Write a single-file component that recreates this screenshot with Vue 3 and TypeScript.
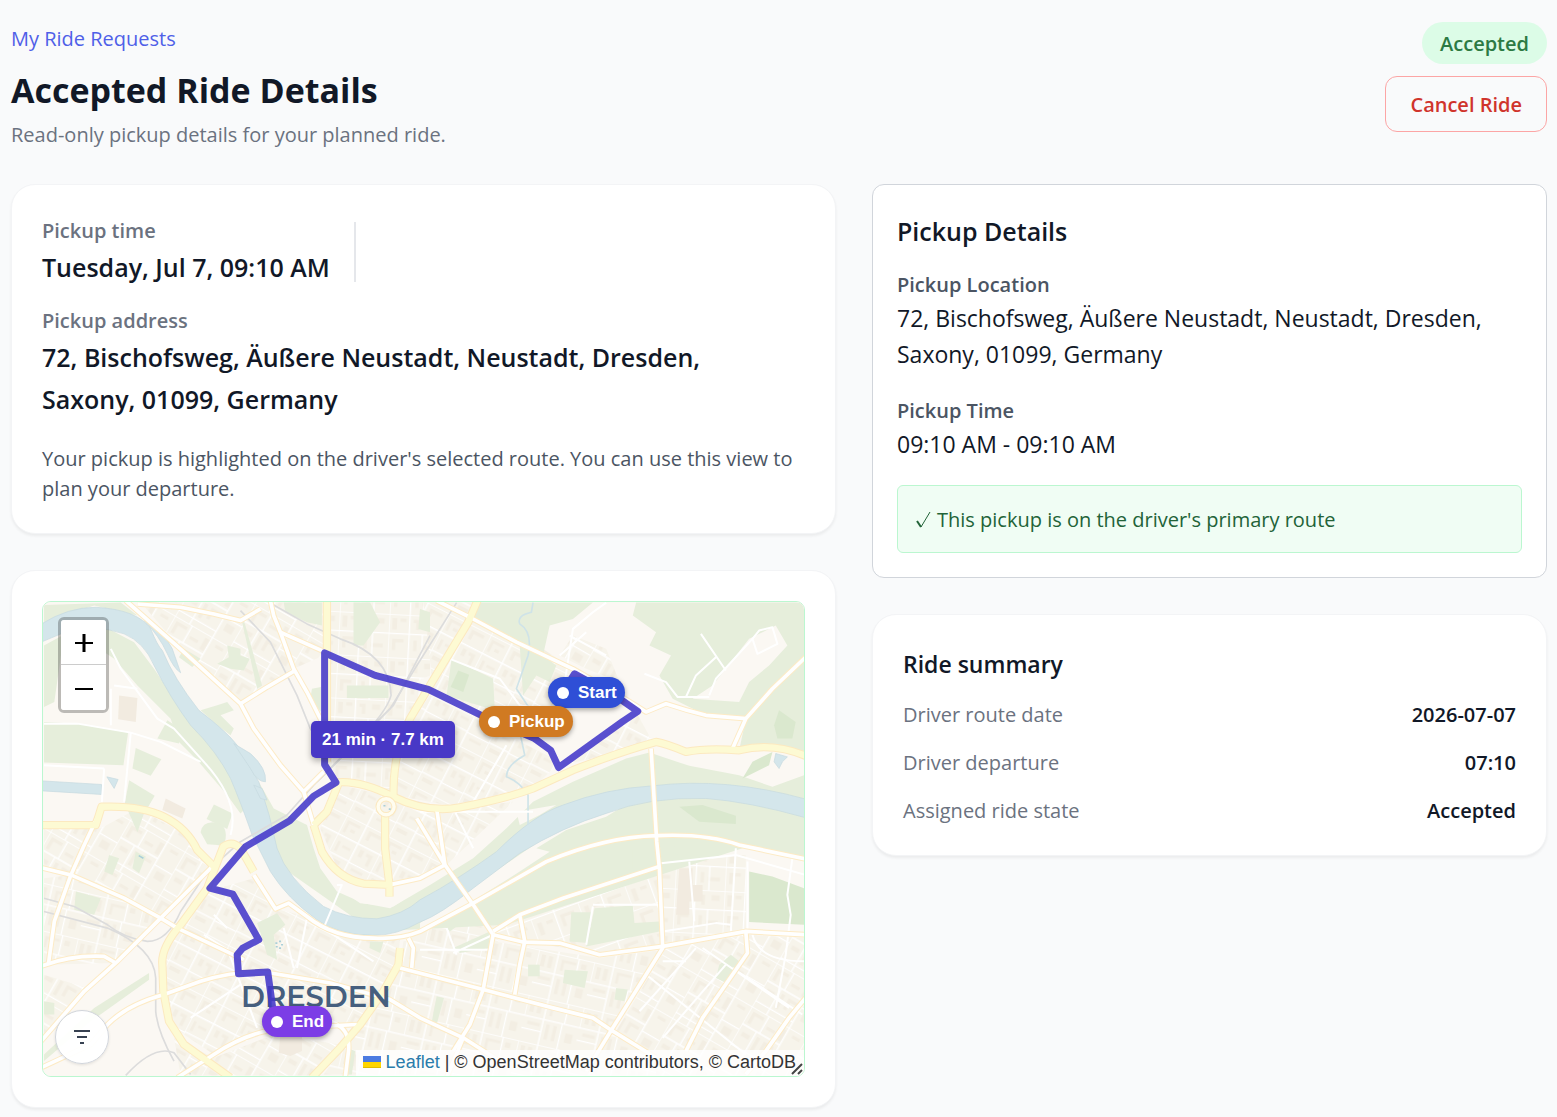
<script setup lang="ts">
interface Area {
  kind: string
  d: string
}

const summary = [
  { label: 'Driver route date', value: '2026-07-07' },
  { label: 'Driver departure', value: '07:10' },
  { label: 'Assigned ride state', value: 'Accepted' },
]

const districts: Area[] = [
  { kind: 'grid-a', d: 'M300 21L860 21L850 180L760 220L600 325L430 170Z' },
  { kind: 'grid-b', d: 'M870 21H1170V240L1060 290L870 170Z' },
  { kind: 'grid-c', d: 'M1170 300L1560 500L1480 580L1260 637L1060 600L1070 440Z' },
  { kind: 'grid-c', d: 'M1150 21L1300 21L1600 220L1480 430L1180 280Z' },
  { kind: 'grid-b', d: 'M870 190L1170 290L1060 480V600L900 560L860 500Z' },
  { kind: 'grid-c', d: 'M840 700L900 570L1060 605L1250 640L1420 620L1215 815L1048 870L900 840Z' },
  { kind: 'grid-a', d: 'M9 700H180L290 640L440 720L520 815L360 970L90 840L9 820Z' },
  { kind: 'grid-d', d: 'M9 850L90 840L360 970L225 1105L9 1110Z' },
  { kind: 'grid-c', d: 'M500 890L640 850L705 942L800 965L980 1030L1080 1035L1070 1110L960 1290L690 1310L520 1380L385 1290L365 1090Z' },
  { kind: 'grid-d', d: 'M1090 1040L1300 930L1380 1020L1330 1185L1220 1440H850L960 1290L1080 1110Z' },
  { kind: 'grid-e', d: 'M1300 930L1520 800L1700 742H1852L1870 1055L1680 1080L1360 1020Z' },
  { kind: 'grid-d', d: 'M1360 1040L1680 1090L1870 1065L1720 1300L1330 1180Z' },
  { kind: 'grid-b', d: 'M1860 810L2120 780V1010L1870 1050Z' },
  { kind: 'grid-a', d: 'M1880 1060L2120 1020L2295 1030V1443H1650Z' },
  { kind: 'grid-d', d: 'M1330 1190L1660 1280L1850 1400V1443H1220Z' },
  { kind: 'grid-a', d: 'M400 1330L520 1390L700 1320L900 1350L820 1443H420Z' },
  { kind: 'grid-a', d: 'M9 1140L140 1180L9 1330Z' },
  { kind: 'grid-c', d: 'M1570 510L1790 350L1840 440L1740 470Z' },
  { kind: 'grid-a', d: 'M1600 120L1700 160L1740 260L1640 220L1560 180Z' },
]

const areas: Area[] = [
  { kind: 'park', d: 'M9 28L240 21L290 60L160 30L9 80Z' },
  { kind: 'park', d: 'M9 150L100 100L200 98L280 140L340 220L440 370L530 460L580 550L615 640L600 655L560 600L470 495L415 440L390 370L290 270L220 190L130 130L60 180L40 320L9 335Z' },
  { kind: 'park', d: 'M9 380L110 385L262 412L248 510L9 502Z' },
  { kind: 'park', d: 'M285 458L362 492L330 542L275 520Z' },
  { kind: 'park', d: 'M265 555L342 602L308 660L290 712L252 625Z' },
  { kind: 'park', d: 'M520 628L576 655L560 702L498 672Z' },
  { kind: 'park', d: 'M480 712Q485 680 520 682T556 720T530 750L500 748Z' },
  { kind: 'park', d: 'M380 375L418 400L415 445L350 430Z' },
  { kind: 'park', d: 'M430 160L480 190L455 215L415 185Z' },
  { kind: 'park', d: 'M560 150L600 160L600 180L628 190L610 225L570 220L530 205L565 185Z' },
  { kind: 'park', d: 'M605 80L612 80L665 270L650 280Z' },
  { kind: 'park', d: 'M480 345L530 330L560 320L580 345L540 360L580 400L570 420L530 390Z' },
  { kind: 'park', d: 'M730 21H845V90L800 80L735 50Z' },
  { kind: 'park', d: 'M940 21H990L1020 80L970 150H940Z' },
  { kind: 'park', d: 'M1140 40L1170 50V110L1135 100Z' },
  { kind: 'park', d: 'M920 270H1045V308H920Z' },
  { kind: 'park', d: 'M815 280L842 275V350L810 310Z' },
  { kind: 'park', d: 'M1235 190L1360 250L1365 345L1220 300Z' },
  { kind: 'wood', d: 'M1255 225L1288 238L1270 290L1232 275Z' },
  { kind: 'park', d: 'M1320 21H1660L1600 70L1530 90L1510 180L1550 210L1530 260L1490 240L1450 300L1440 150L1290 65Z' },
  { kind: 'park', d: 'M1790 21H2295V480L2190 450L2100 465L2120 370L1980 350L1900 310L1860 240L1895 180L1830 150L1850 110L1780 60Z' },
  { kind: 'land', d: 'M1960 310L2020 270L2130 130L2210 90L2245 150L2190 210L2130 260L2100 320Z' },
  { kind: 'wood', d: 'M2220 345L2270 380L2260 430L2215 430L2205 390Z' },
  { kind: 'park', d: 'M655 560L700 640L800 690L820 760L840 820L890 890L970 925L1050 940L1170 870L1300 790L1400 700L1480 620L1600 560L1760 490L1830 472L1950 512L2100 540L2200 575L2295 540V700L1400 990L1000 1010L700 800Z' },
  { kind: 'park', d: 'M1460 790L1540 735L1700 650L1860 612L2295 660V790L2100 745L2000 722L1840 715L1660 742Z' },
  { kind: 'land', d: 'M1570 690L1740 640L1700 665L1580 705L1490 760L1530 770L1440 830L1200 980L1140 1010V985Z' },
  { kind: 'land', d: 'M845 770L900 850L980 890L1060 905L1170 850L1215 815L1190 850L1060 935L960 925L880 870Z' },
  { kind: 'land', d: 'M1430 650L1550 630L1500 660L1440 690Z' },
  { kind: 'wood', d: 'M1920 635L1990 630L2090 662V687L1980 680Z' },
  { kind: 'wood', d: 'M2140 500L2200 470L2190 510L2110 550Z' },
  { kind: 'park', d: 'M1915 730L2030 735V755L1950 795L1900 770Z' },
  { kind: 'wood', d: 'M2130 830L2200 845L2295 880V990L2130 982Z' },
  { kind: 'park', d: 'M1665 940L1780 932L1785 985L1860 980V1010L1640 1055Z' },
  { kind: 'park', d: 'M1595 952H1655L1645 1045L1590 1040Z' },
  { kind: 'park', d: 'M1575 1125L1645 1130L1635 1180L1570 1165Z' },
  { kind: 'park', d: 'M1780 765H1818V820H1780Z' },
  { kind: 'park', d: 'M1360 950L1400 925L1420 945L1370 975Z' },
  { kind: 'park', d: 'M1210 990L1280 950L1290 965L1230 1010Z' },
  { kind: 'park', d: 'M1240 1060L1350 1010V1060L1260 1075Z' },
  { kind: 'park', d: 'M1465 1110H1500V1145H1465Z' },
  { kind: 'park', d: 'M2040 1110L2075 1080L2100 1100L2060 1165L2030 1150Z' },
  { kind: 'park', d: 'M1730 1180L1765 1185L1755 1220L1725 1215Z' },
  { kind: 'park', d: 'M650 985L710 955L735 990L700 1020L710 1095L680 1080L665 1030Z' },
  { kind: 'park', d: 'M105 890L180 910L160 960L100 945Z' },
  { kind: 'park', d: 'M205 780L235 790L215 840L190 830Z' },
  { kind: 'park', d: 'M285 770L315 785L295 835L275 820Z' },
  { kind: 'park', d: 'M160 1240L325 1135V1155L200 1245L150 1280L9 1400V1380Z' },
  { kind: 'park', d: 'M9 1220L40 1225V1260H9Z' },
  { kind: 'park', d: 'M990 1040H1030L1020 1075L988 1060Z' },
  { kind: 'park', d: 'M920 1360L945 1370L935 1440H915Z' },
  { kind: 'park', d: 'M1190 1205L1212 1210L1190 1290L1172 1300Z' },
  { kind: 'building', d: 'M235 300L290 308L285 380L232 372Z' },
  { kind: 'building', d: 'M375 610L435 640L425 670L365 645Z' },
  { kind: 'building', d: 'M720 1320H785V1370L750 1385L715 1375Z' },
  { kind: 'building', d: 'M1920 820H1960V870H1990V920H1950V960H1910Z' },
]

const trunkRoads = [
  'M860 10V500',
  'M0 690H165L182 635Q300 630 370 665T470 765L520 815',
  'M640 830L600 760Q575 735 548 755L500 880L420 990Q360 1060 365 1110L368 1190L385 1280L430 1350L570 1450',
  'M890 562Q960 555 1060 605T1260 637Q1400 610 1480 580L1600 525Q1740 470 1850 440Q1880 445 1940 470Q2000 458 2100 465Q2200 440 2300 482',
  'M1315 10L1285 80L1170 270L1110 370Q1060 460 1060 600',
  'M895 565L860 650L820 690',
  'M820 690L845 770Q890 850 970 866L1048 870V905',
  'M1035 660V760L1048 870',
  'M1080 1060L1075 1110L1030 1190L960 1290L900 1360L815 1450',
]

const mainRoads = [
  'M255 15L340 90L430 170L600 325L640 400L720 510L790 590L820 690',
  'M290 25L420 35L520 55L600 75L660 40',
  'M690 15L700 60L720 110L760 220L800 290L850 390',
  'M600 325L680 275L765 225',
  'M720 110L855 170',
  'M790 590L850 530',
  'M1190 15L1290 65L1430 140L1600 220L1740 300L1820 350L1880 325Q1940 345 2000 360L2120 370',
  'M2300 185L2200 280L2120 370L2080 460',
  'M1835 460L1852 740L1860 820L1870 1060L1720 1300L1640 1430',
  'M640 840L705 942L745 925L800 965Q880 1030 1000 1030Q1080 1035 1140 1010L1300 925L1520 800Q1700 725 1852 722Q2000 715 2100 750L2300 792',
  'M1190 640L1215 810',
  'M1130 670L1215 810L1300 930L1360 1020',
  'M1360 1020L1450 1042L1560 1045L1680 1080L1870 1055L2120 1010L2300 1020',
  'M1360 1020L1330 1185L1290 1290L1240 1370',
  'M1080 1120L1330 1185L1540 1240L1660 1270L1720 1310L1850 1390',
  'M0 1420L150 1350L200 1290Q260 1230 370 1200L480 1160Q590 1125 690 1135L870 1165L1050 1215L1140 1270L1270 1330L1380 1400',
  'M1270 1330L1220 1450',
  'M0 818L90 840L250 910L360 970L410 1000L610 1095',
  'M182 640L130 750L90 840L40 980L22 1110',
  'M0 1340L130 1190L230 1100L360 970L440 890L530 800',
  'M0 1115Q90 1080 190 1085L225 1105',
  'M410 1450L520 1380Q640 1300 760 1300L950 1290',
  'M2120 1010L2125 1075L1990 1270L1940 1370',
  'M2300 1210L2250 1270L2180 1370L2120 1440',
  'M1425 1200L1440 1110L1455 1040L1440 960',
  'M1360 1010L1440 960L1570 910L1860 815',
  'M1048 870L1140 850L1215 810',
  'M1105 1030L1120 1060L1115 1120',
  'M890 1290Q930 1310 925 1370L915 1450',
]

const minorRoads = [
  'M210 160L240 220L350 370L400 400L490 500Q600 620 570 720',
  'M9 385L110 385L270 412L360 440L480 500',
  'M270 412L250 620M190 520L182 635M9 510L190 520',
  'M210 280V390M220 270L290 280',
  'M1560 360L1600 100L1660 50L1700 21M1230 190L1380 250L1440 330L1560 350',
  'M1640 110L1560 180M1590 120L1700 180',
  'M1815 235L1880 260L1915 305H2010M1985 115L2060 225M1940 305L1970 240L2030 185',
  'M2010 300L2030 250L2140 130',
  'M2140 130L2160 105L2200 95L2215 145L2155 175Z',
  'M1240 640L1300 760M1140 650H1480M1400 450L1300 620',
  'M1865 805L2090 780L2300 840M1950 800L1965 980M2090 760L2075 1010M2125 800V1010',
  'M2260 790L2245 900L2255 960L2240 1080L2210 1240',
  'M1660 930H1860M1660 935L1640 1050M1870 1010L2030 985L2075 990',
  'M1360 1020L1240 1075M1140 1065H1350M1220 1000L1250 1080',
  'M2140 1020Q2160 1100 2295 1100M2080 1120L2290 1260M1990 1060L2250 1240',
  'M1870 1100H1940M1820 1140L2120 1380M1800 1250L1970 1060M1870 1330L2060 1110',
  'M890 870L905 870L850 1000',
  'M490 1020L600 1090M520 960L560 1000M560 1060L650 1300M450 1270L600 1170',
  'M730 1000L760 1120M800 970L770 1120M850 1000L1000 1100',
]

const rails = [
  'M600 45L690 140L770 300L810 400L860 480',
  'M700 28L800 85L900 130Q1050 180 1053 300Q1040 350 950 440L820 570L740 660L600 740L500 830L420 950Q380 1040 320 1040Q250 1030 200 990L100 935L9 910',
  'M9 950L200 1000Q340 1060 345 1150V1250Q350 1310 400 1400',
  'M1170 120L1060 330L830 560',
  'M1250 21L1140 195L1050 340L840 550',
  'M255 1443Q340 1350 400 1375L450 1440',
]

const routePath =
  'M1590 258L1605 235L1740 310L1795 348L1750 378L1557 517L1533 465L1485 430L1320 358L1165 282L1005 240L853 172L853 508L887 562L820 603L748 677L615 755L508 880L577 898L655 1035L607 1060L590 1080L594 1137L682 1132L697 1240L720 1270'
</script>

<template>
  <main class="page">
    <header class="header">
      <div class="heading">
        <a class="back" href="#">My Ride Requests</a>
        <h1>Accepted Ride Details</h1>
        <p class="subtitle">Read-only pickup details for your planned ride.</p>
      </div>
      <div class="actions">
        <span class="badge">Accepted</span>
        <button type="button" class="cancel">Cancel Ride</button>
      </div>
    </header>

    <div class="columns">
      <div class="column">
        <section class="card">
          <div class="time-row">
            <div>
              <p class="label">Pickup time</p>
              <p class="lead">Tuesday, Jul 7, 09:10 AM</p>
            </div>
            <span class="divider"></span>
          </div>
          <div class="address">
            <p class="label">Pickup address</p>
            <p class="lead">72, Bischofsweg, Äußere Neustadt, Neustadt, Dresden, Saxony, 01099, Germany</p>
          </div>
          <p class="note">Your pickup is highlighted on the driver's selected route. You can use this view to plan your departure.</p>
        </section>

        <section class="card map-card">
          <div class="map">
            <svg class="layer" viewBox="6 18 2289 1428" preserveAspectRatio="xMidYMid slice" aria-hidden="true">
              <defs>
                <pattern id="grid-a" width="190" height="150" patternUnits="userSpaceOnUse" patternTransform="rotate(30)">
                  <rect width="190" height="150" class="urban" />
                  <path class="house" d="M12 12H50V22H22V50H12ZM70 30H98V40H70ZM112 12H126V50H112ZM150 14H176V24H150ZM14 80H40V94H14ZM60 72H70V120H60ZM84 74H118V84H94V110H84ZM146 92H174V116H146Z" />
                  <path class="street" d="M0 0H190M0 60H130M130 80H190M60 0V60M130 0V150M0 0V150M50 60V150M0 130H130" />
                </pattern>
                <pattern id="grid-b" width="150" height="130" patternUnits="userSpaceOnUse" patternTransform="rotate(3)">
                  <rect width="150" height="130" class="urban" />
                  <path class="house" d="M10 12H24V46H10ZM34 12H52V22H34ZM74 14H92V44H82V24H74ZM112 14H136V30H112ZM12 74H46V84H22V108H12ZM76 76H86V108H76ZM98 90H134V102H98Z" />
                  <path class="street" d="M0 0H150M0 58H150M62 0V130M0 0V58M102 58V130M0 58V130" />
                </pattern>
                <pattern id="grid-c" width="140" height="170" patternUnits="userSpaceOnUse" patternTransform="rotate(27)">
                  <rect width="140" height="170" class="urban" />
                  <path class="house" d="M10 12H52V20H18V50H10ZM30 32H44V42H30ZM82 12H124V22H92V42H82ZM12 80H20V112H12ZM30 86H56V94H30ZM84 74H96V96H84ZM106 76H126V112H116V86H106ZM12 134H46V146H12ZM84 136H122V144H84Z" />
                  <path class="street" d="M0 0H140M0 62H140M68 0V170M0 0V170M0 122H68M68 124H140" />
                </pattern>
                <pattern id="grid-d" width="170" height="140" patternUnits="userSpaceOnUse" patternTransform="rotate(13)">
                  <rect width="170" height="140" class="urban" />
                  <path class="house" d="M12 12H24V48H12ZM34 12H46V48H34ZM74 14H118V22H82V48H74ZM134 14H150V30H134ZM14 76H52V86H14ZM72 74H82V120H72ZM94 74H104V120H94ZM134 88H156V116H134Z" />
                  <path class="street" d="M0 0H170M0 62H170M60 0V140M124 0V62M118 62V140M0 0V62M0 100H60" />
                </pattern>
                <pattern id="grid-e" width="150" height="150" patternUnits="userSpaceOnUse" patternTransform="rotate(-20)">
                  <rect width="150" height="150" class="urban" />
                  <path class="house" d="M14 14H56V24H24V50H14ZM90 14H104V48H90ZM116 20H132V30H116ZM14 88H28V126H14ZM42 90H62V100H42ZM88 86H132V96H98V124H88Z" />
                  <path class="street" d="M0 0H150M0 70H150M74 0V150M0 70V150" />
                </pattern>
              </defs>
              <rect class="land" x="0" y="0" width="2310" height="1460" />
              <path v-for="(a, i) in districts" :key="'d' + i" :d="a.d" :class="a.kind" />
              <path v-for="(a, i) in areas" :key="'a' + i" :d="a.d" :class="a.kind" />
              <path
                class="water"
                d="M0 86Q80 35 165 35Q290 42 330 100Q350 150 365 165Q400 250 475 345Q560 410 590 450Q630 520 655 560Q690 660 710 760Q740 850 850 935Q920 972 1010 972Q1090 960 1140 915Q1260 850 1370 770Q1480 660 1570 630Q1700 580 1840 572Q2060 545 2300 612V668Q2130 620 2000 610Q1830 605 1700 655Q1570 695 1440 775L1300 880Q1200 960 1140 982Q1070 1022 1000 1022Q890 1020 830 975Q740 910 690 830Q650 750 635 720Q600 620 570 550Q530 470 450 390Q390 310 340 210Q310 140 250 115Q150 80 60 115L0 140Z"
              />
              <path
                class="water"
                d="M310 75Q370 110 395 160L420 232Q400 220 380 175Q355 120 310 75ZM580 445L630 475Q680 520 675 560Q650 560 630 520ZM640 570L665 580L680 615L660 610ZM0 557L182 568V598L0 587ZM198 545L232 553L220 580ZM2210 475L2245 485L2230 500L2220 520L2205 500Z"
              />
              <path class="stream" d="M1480 21L1475 50Q1430 60 1440 85Q1480 110 1465 180L1430 280L1470 340L1440 410L1455 480Q1400 510 1400 545Q1440 560 1465 600V690" />
              <path v-for="(d, i) in rails" :key="'r' + i" :d="d" class="rail" />
              <path v-for="(d, i) in minorRoads" :key="'m' + i" :d="d" class="minor" />
              <path v-for="(d, i) in mainRoads" :key="'mc' + i" :d="d" class="main-case" />
              <path v-for="(d, i) in trunkRoads" :key="'tc' + i" :d="d" class="trunk-case" />
              <path v-for="(d, i) in mainRoads" :key="'mf' + i" :d="d" class="main-fill" />
              <path v-for="(d, i) in trunkRoads" :key="'tf' + i" :d="d" class="trunk-fill" />
              <circle class="ring-case" cx="1038" cy="635" r="24" />
              <circle class="ring" cx="1038" cy="635" r="24" />
              <path class="fountain" d="M1030 632h6M1046 642h6M705 1045h6M716 1040h6M722 1050h6M706 1056h6M716 1060h6M294 782l14 8" />
            </svg>
            <span class="city">DRESDEN</span>
            <svg class="layer" viewBox="6 18 2289 1428" preserveAspectRatio="xMidYMid slice" aria-hidden="true">
              <path class="route" :d="routePath" />
            </svg>

            <span class="pin start"><i class="dot"></i>Start</span>
            <span class="pin pickup"><i class="dot"></i>Pickup</span>
            <span class="pin end"><i class="dot"></i>End</span>
            <span class="trip">21 min · 7.7 km</span>

            <div class="zoom">
              <button type="button" aria-label="Zoom in">
                <svg width="20" height="20" viewBox="0 0 20 20"><path d="M1 10H19" stroke-width="2" /><path d="M10 1V19" stroke-width="3" /></svg>
              </button>
              <button type="button" aria-label="Zoom out">
                <svg width="20" height="20" viewBox="0 0 20 20"><path d="M1 10H19" stroke-width="2" /></svg>
              </button>
            </div>

            <button type="button" class="filter" aria-label="Filter">
              <svg width="18" height="16" viewBox="0 0 18 16"><path d="M1 2H17M4 8H14M7 14H11" /></svg>
            </button>

            <div class="attribution">
              <svg class="flag" width="18" height="12" viewBox="0 0 18 12"><path fill="#4c7be1" d="M0 0h18v6H0z" /><path fill="#ffd500" d="M0 6h18v5H0z" /><path fill="#e0bc00" d="M0 11h18v1H0z" /></svg>
              <a href="#">Leaflet</a> | © OpenStreetMap contributors, © CartoDB
            </div>
            <svg class="grip" width="14" height="14" viewBox="0 0 14 14"><path d="M2 12L12 2M8 12L12 8" /></svg>
          </div>
        </section>
      </div>

      <div class="column">
        <section class="details">
          <h2 class="lead">Pickup Details</h2>
          <div class="field">
            <p class="label dark">Pickup Location</p>
            <p class="value">72, Bischofsweg, Äußere Neustadt, Neustadt, Dresden, Saxony, 01099, Germany</p>
          </div>
          <div class="field">
            <p class="label dark">Pickup Time</p>
            <p class="value">09:10 AM - 09:10 AM</p>
          </div>
          <p class="notice">
            <svg width="15" height="18" viewBox="0 0 15 18" aria-hidden="true"><path class="tick-short" d="M1 10L5 16" /><path class="tick-long" d="M5 16L14 1" /></svg>
            <span>This pickup is on the driver's primary route</span>
          </p>
        </section>

        <section class="card summary">
          <h2>Ride summary</h2>
          <dl>
            <div v-for="row in summary" :key="row.label">
              <dt>{{ row.label }}</dt>
              <dd>{{ row.value }}</dd>
            </div>
          </dl>
        </section>
      </div>
    </div>
  </main>
</template>

<style>
body {
  margin: 0;
  background: #f9fafb;
}
</style>

<style scoped>
* {
  box-sizing: border-box;
}
h1,
h2,
p,
dl,
dd {
  margin: 0;
}
button {
  font: inherit;
  cursor: pointer;
}
.page {
  padding: 22px 10px 9px 11px;
  font-family: "Segoe UI", "Open Sans", "Noto Sans", sans-serif;
  font-size: 20px;
  line-height: 30px;
  color: #111827;
}
.header {
  display: flex;
  justify-content: space-between;
  align-items: flex-start;
  margin-bottom: 34px;
}
.heading {
  padding-top: 2px;
}
.back {
  display: block;
  color: #4f5fe8;
  text-decoration: none;
}
h1 {
  margin-top: 14px;
  font-size: 34px;
  line-height: 45px;
  font-weight: 700;
}
.subtitle {
  margin-top: 7px;
  color: #6b7280;
}
.actions {
  display: flex;
  flex-direction: column;
  align-items: flex-end;
  gap: 12px;
}
.badge {
  padding: 7px 18px 5px;
  border-radius: 21px;
  background: #dcfce7;
  color: #2c7a43;
  font-weight: 600;
}
.cancel {
  padding: 13px 24px 11px;
  border: 1px solid #fca5a5;
  border-radius: 12px;
  background: transparent;
  color: #d0342c;
  font-weight: 600;
}
.columns {
  display: grid;
  grid-template-columns: minmax(0, 11fr) minmax(0, 9fr);
  gap: 36px;
  align-items: start;
}
.column {
  display: flex;
  flex-direction: column;
  gap: 36px;
}
.card {
  padding: 31px 30px 29px;
  border: 1px solid #f3f4f6;
  border-radius: 24px;
  background: #fff;
  box-shadow: 0 2px 3px rgba(0, 0, 0, 0.06);
}
.map-card {
  padding: 30px;
}
.time-row {
  display: flex;
  align-items: center;
  gap: 24px;
}
.divider {
  width: 2px;
  height: 60px;
  background: #e5e7eb;
}
.label {
  color: #6b7280;
  font-weight: 600;
}
.label.dark {
  color: #4b5563;
}
.lead {
  font-size: 25px;
  line-height: 42px;
  font-weight: 600;
}
.address {
  margin-top: 18px;
  padding-right: 24px;
}
.note {
  margin-top: 24px;
  color: #4b5563;
}
.details {
  display: flex;
  flex-direction: column;
  gap: 24px;
  padding: 25px 24px 24px;
  border: 1px solid #d1d5db;
  border-radius: 12px;
  background: #fff;
}
.details .lead {
  margin-bottom: -6px;
}
.value {
  font-size: 23px;
  line-height: 36px;
}
.notice {
  display: flex;
  align-items: center;
  gap: 6px;
  margin-top: -1px;
  padding: 19px 18px 17px;
  border: 1px solid #bbf7d0;
  border-radius: 6px;
  background: #f0fdf4;
  color: #226338;
}
.notice svg {
  fill: none;
  stroke: #226338;
}
.tick-short {
  stroke-width: 2;
}
.tick-long {
  stroke-width: 1;
}
.summary h2 {
  font-size: 23px;
  line-height: 36px;
  font-weight: 600;
}
.summary dl {
  display: grid;
  gap: 18px;
  margin-top: 18px;
}
.summary dl div {
  display: flex;
  justify-content: space-between;
}
.summary dt {
  color: #6b7280;
}
.summary dd {
  font-weight: 600;
}

.map {
  position: relative;
  height: 476px;
  overflow: hidden;
  border: 1px solid #bbf7d0;
  border-radius: 9px;
  background: #fbf8f3;
  font-family: "Liberation Sans", Arial, sans-serif;
}
.layer {
  position: absolute;
  inset: 0;
  width: 100%;
  height: 100%;
}
.land {
  fill: #fbf8f3;
}
.urban {
  fill: #f7f4eb;
}
.house {
  fill: #f3eee3;
}
.building {
  fill: #f2ebe0;
}
.grid-a {
  fill: url(#grid-a);
}
.grid-b {
  fill: url(#grid-b);
}
.grid-c {
  fill: url(#grid-c);
}
.grid-d {
  fill: url(#grid-d);
}
.grid-e {
  fill: url(#grid-e);
}
.park {
  fill: #e6eedb;
}
.wood {
  fill: #dae8ce;
}
.water {
  fill: #d4e6eb;
  stroke: #c5dae0;
  stroke-width: 2;
}
.stream,
.rail,
.street,
.minor,
.main-case,
.main-fill,
.trunk-case,
.trunk-fill,
.ring-case,
.ring,
.fountain {
  fill: none;
  stroke-linejoin: round;
}
.stream {
  stroke: #cfe3e8;
  stroke-width: 5;
}
.rail {
  stroke: #dcdcdc;
  stroke-width: 5;
}
.street {
  stroke: #fff;
  stroke-width: 4;
}
.minor {
  stroke: #fff;
  stroke-width: 6;
}
.main-case {
  stroke: #fdebc6;
  stroke-width: 17;
}
.main-fill {
  stroke: #fff;
  stroke-width: 11;
}
.trunk-case {
  stroke: #fce9c0;
  stroke-width: 25;
}
.trunk-fill {
  stroke: #fdfad3;
  stroke-width: 19;
}
.ring-case {
  stroke: #fce9c0;
  stroke-width: 16;
}
.ring {
  stroke: #fffdf0;
  stroke-width: 10;
}
.fountain {
  stroke: #a9cfd8;
  stroke-width: 5;
}
.route {
  fill: none;
  stroke: #4338ca;
  stroke-opacity: 0.88;
  stroke-width: 21;
  stroke-linecap: round;
  stroke-linejoin: round;
}
.city {
  position: absolute;
  left: 198px;
  top: 376px;
  font-family: Montserrat, Inter, sans-serif;
  font-size: 29px;
  line-height: 38px;
  font-weight: 600;
  color: #465f7e;
}
.pin {
  position: absolute;
  display: flex;
  align-items: center;
  gap: 9px;
  height: 31px;
  padding: 0 8px 0 9px;
  border-radius: 16px;
  color: #fff;
  font-size: 17px;
  font-weight: 700;
  white-space: nowrap;
  box-shadow: 0 2px 5px rgba(0, 0, 0, 0.35);
}
.dot {
  width: 12px;
  height: 12px;
  border-radius: 50%;
  background: #fff;
}
.start {
  left: 505px;
  top: 75px;
  background: #2f4fd6;
}
.pickup {
  left: 436px;
  top: 104px;
  background: #d07a22;
}
.end {
  left: 219px;
  top: 404px;
  background: #7c3de6;
}
.trip {
  position: absolute;
  left: 268px;
  top: 119px;
  padding: 0 11px;
  border-radius: 5px;
  background: #4838c6;
  color: #fff;
  font-size: 17px;
  line-height: 37px;
  font-weight: 700;
  white-space: nowrap;
  box-shadow: 0 3px 6px rgba(0, 0, 0, 0.3);
}
.zoom {
  position: absolute;
  left: 15px;
  top: 15px;
  display: flex;
  flex-direction: column;
  border: 3px solid rgba(0, 0, 0, 0.25);
  border-radius: 6px;
  background-clip: padding-box;
}
.zoom button {
  display: flex;
  align-items: center;
  justify-content: center;
  width: 45px;
  height: 45px;
  padding: 2px 0 0;
  border: 0;
  border-radius: 0 0 3px 3px;
  background: #fff;
}
.zoom button:first-child {
  border-bottom: 1px solid #ccc;
  border-radius: 3px 3px 0 0;
}
.zoom path {
  stroke: #000;
}
.filter {
  position: absolute;
  left: 12px;
  bottom: 12px;
  display: flex;
  align-items: center;
  justify-content: center;
  width: 54px;
  height: 54px;
  padding: 0;
  border: 1px solid #d1d5db;
  border-radius: 50%;
  background: rgba(255, 255, 255, 0.95);
  box-shadow: 0 1px 3px rgba(0, 0, 0, 0.1);
}
.filter path {
  stroke: #374151;
  stroke-width: 2;
}
.attribution {
  position: absolute;
  right: 0;
  bottom: 0;
  padding: 0 8px 2px 7px;
  background: rgba(255, 255, 255, 0.8);
  color: #333;
  font-size: 18px;
  line-height: 24px;
  white-space: nowrap;
}
.flag {
  margin-right: 5px;
}
.attribution a {
  color: #2a7cab;
  text-decoration: none;
}
.grip {
  position: absolute;
  right: 0;
  bottom: 0;
  stroke: #444;
  stroke-width: 2;
}
</style>
